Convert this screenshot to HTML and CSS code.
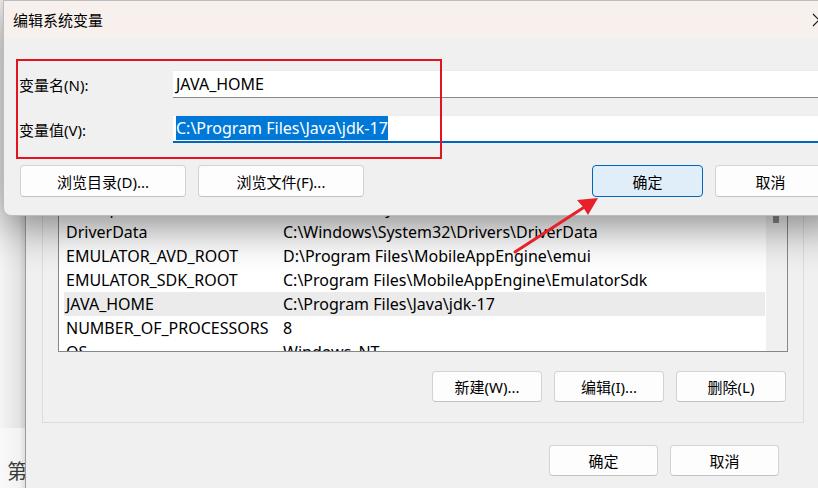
FILE: index.html
```html
<!DOCTYPE html>
<html lang="zh-CN">

<head>
    <meta charset="UTF-8">
    <title>编辑系统变量</title>
    <link rel="stylesheet" href="styles.css">
</head>

<body>
    <div class="screen">
        <div class="behind">
            <div class="behind-top"></div>
            <div class="behind-bottom"><span class="peek">第</span></div>
        </div>

        <div class="window">
            <div class="group">
                <div class="group-title">系统变量(S)</div>
                <div class="list">
                    <div class="rows">
                        <div class="row head"><span class="name">变量</span><span>值</span></div>
                        <div class="row"><span class="name">ComSpec</span><span>C:\Windows\system32\cmd.exe</span></div>
                        <div class="row"><span class="name">DriverData</span><span>C:\Windows\System32\Drivers\DriverData</span></div>
                        <div class="row"><span class="name">EMULATOR_AVD_ROOT</span><span>D:\Program Files\MobileAppEngine\emui</span></div>
                        <div class="row"><span class="name">EMULATOR_SDK_ROOT</span><span>C:\Program Files\MobileAppEngine\EmulatorSdk</span></div>
                        <div class="row selected"><span class="name">JAVA_HOME</span><span>C:\Program Files\Java\jdk-17</span></div>
                        <div class="row"><span class="name">NUMBER_OF_PROCESSORS</span><span>8</span></div>
                        <div class="row"><span class="name">OS</span><span>Windows_NT</span></div>
                    </div>
                    <div class="scrollbar"><div class="thumb"></div></div>
                </div>
                <div class="actions">
                    <button class="btn">新建(W)...</button>
                    <button class="btn">编辑(I)...</button>
                    <button class="btn">删除(L)</button>
                </div>
            </div>
            <div class="actions footer">
                <button class="btn">确定</button>
                <button class="btn">取消</button>
            </div>
        </div>

        <div class="dialog">
            <div class="titlebar">
                <span class="title">编辑系统变量</span>
                <svg class="close" width="14" height="14" viewBox="0 0 14 14">
                    <path d="M1 1 L13 13 M13 1 L1 13" stroke="#1a1a1a" stroke-width="1.2" fill="none" />
                </svg>
            </div>
            <div class="dialog-body">
                <div class="field">
                    <label>变量名(N):</label>
                    <div class="input">JAVA_HOME</div>
                </div>
                <div class="field">
                    <label>变量值(V):</label>
                    <div class="input focused"><span class="selection">C:\Program Files\Java\jdk-17</span></div>
                </div>
                <div class="dialog-actions">
                    <button class="btn wide">浏览目录(D)...</button>
                    <button class="btn wide">浏览文件(F)...</button>
                    <span class="spacer"></span>
                    <button class="btn primary">确定</button>
                    <button class="btn">取消</button>
                </div>
            </div>
            <!-- 标注框 -->
            <div class="callout"></div>
        </div>

        <svg class="arrow" width="818" height="488" viewBox="0 0 818 488">
            <line x1="515" y1="252" x2="586" y2="206" stroke="#e8202a" stroke-width="3" stroke-linecap="round" />
            <polygon points="598,198 588,215 583,207 577,200" fill="#e8202a" />
        </svg>
    </div>
</body>

</html>
```

FILE: styles.css
```css
body {
    margin: 0;
    font-family: "Noto Sans", "Noto Sans CJK SC", sans-serif;
    font-size: 15px;
    color: #000;
}

.screen {
    position: relative;
    width: 818px;
    height: 488px;
    overflow: hidden;
    display: flex;
    background: #f0f0f0;
}

/* окно за диалогом слева */
.behind {
    width: 25px;
    display: flex;
    flex-direction: column;
    overflow: hidden;
}

.behind-top {
    flex: 1;
    background: linear-gradient(to right, #f4f4f4, #e4e4e4 75%, #cccccc);
}

.behind-bottom {
    height: 60px;
    background: linear-gradient(to right, #f9f9f9, #f2f2f2 80%, #dedede);
    display: flex;
    align-items: flex-end;
}

.peek {
    font-family: "Noto Sans CJK SC", sans-serif;
    font-size: 20px;
    color: #3a3a3a;
    margin: 0 0 5px 7px;
    line-height: 24px;
}

.window {
    flex: 1;
    border-left: 1px solid #9c9c9c;
    padding: 140px 14px 0 16px;
    background: #f0f0f0;
}

.group {
    border: 1px solid #dcdcdc;
    padding: 0 15px 20px 15px;
}

.group-title {
    height: 30px;
    line-height: 30px;
}

.list {
    display: flex;
    height: 181px;
    box-sizing: border-box;
    border: 1px solid #828790;
    background: #fff;
    overflow: hidden;
}

.rows {
    flex: 1;
}

.row {
    display: flex;
    height: 24px;
    line-height: 24px;
    margin: 0 1px 0 5px;
    padding-left: 2px;
    font-size: 16px;
    white-space: nowrap;
}

.row .name {
    width: 217px;
}

.row.selected {
    background: #ebebeb;
}

.scrollbar {
    width: 21px;
    background: #f0f0f0;
}

.thumb {
    width: 6px;
    height: 23px;
    margin: 28px 0 0 7px;
    background: #8b8b8b;
}

.actions {
    display: flex;
    justify-content: flex-end;
    gap: 12px;
    margin-top: 19px;
    padding-right: 2px;
}

.actions .btn {
    width: 110px;
    height: 31px;
}

.actions.footer {
    margin-top: 22px;
    padding-right: 25px;
}

.actions.footer .btn {
    width: 109px;
}

.btn {
    font-family: inherit;
    font-size: 15px;
    color: #000;
    background: #fdfdfd;
    border: 1px solid #d3d3d3;
    border-bottom-color: #c2c2c2;
    border-radius: 4px;
    padding: 0;
}

/* диалог поверх окна */
.dialog {
    position: absolute;
    left: 3px;
    top: 0;
    width: 840px;
    border: 1px solid #bcbcbc;
    border-radius: 0 0 0 8px;
    background: #f0f0f0;
    box-shadow: 0 10px 44px rgba(0, 0, 0, 0.48);
    z-index: 2;
}

.titlebar {
    height: 37px;
    display: flex;
    align-items: center;
    padding: 0 18px 0 9px;
    background: #f8f0ed;
}

.title {
    flex: 1;
    white-space: nowrap;
}

.dialog-body {
    padding: 32px 18px 18px 15px;
    display: flex;
    flex-direction: column;
}

.field {
    display: flex;
    align-items: center;
    height: 28px;
    margin-bottom: 17px;
}

.field label {
    width: 154px;
}

.input {
    flex: 1;
    height: 28px;
    box-sizing: border-box;
    background: #fff;
    border-top: 1px solid #ececec;
    border-bottom: 1px solid #878787;
    padding-left: 3px;
    font-size: 16px;
    line-height: 26px;
    white-space: nowrap;
}

.input.focused {
    border-bottom: 2px solid #0067c0;
    line-height: 25px;
}

.selection {
    background: #0078d7;
    color: #fff;
    padding: 1px 0;
}

.dialog-actions {
    display: flex;
    gap: 12px;
    margin-top: 5px;
    padding-left: 1px;
}

.dialog-actions .btn {
    width: 111px;
    height: 32px;
}

.dialog-actions .btn.wide {
    width: 166px;
}

.spacer {
    flex: 1;
}

.btn.primary {
    background: #e0eef9;
    border-color: #0067c0;
}

.callout {
    position: absolute;
    left: 12px;
    top: 58px;
    width: 426px;
    height: 100px;
    box-sizing: border-box;
    border: 2px solid #e3141e;
}

.arrow {
    position: absolute;
    left: 0;
    top: 0;
    z-index: 3;
}
```
